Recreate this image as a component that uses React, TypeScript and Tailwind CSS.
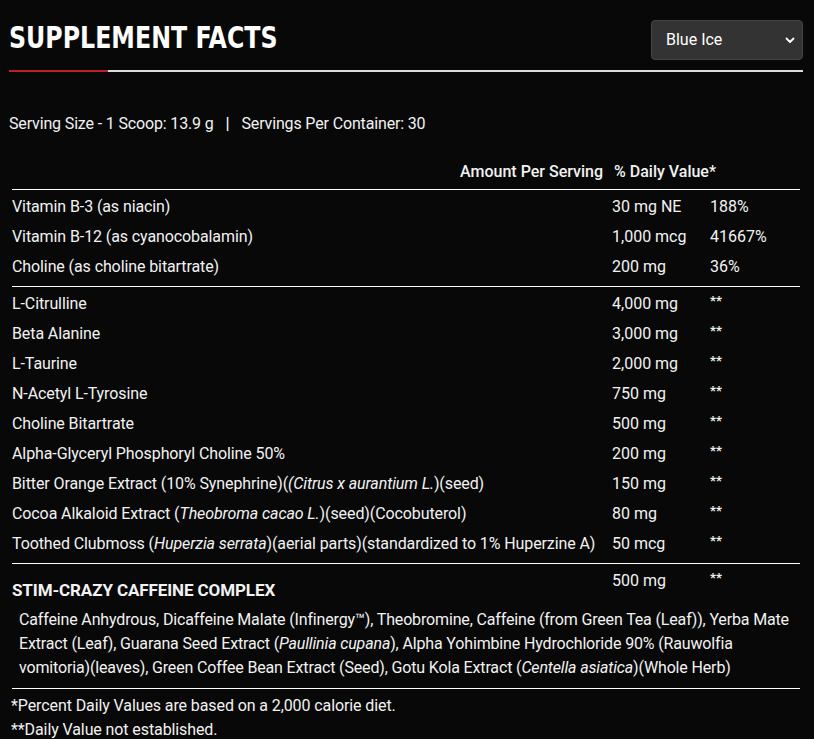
import React from "react";

type Row = { name: React.ReactNode; amt: string; dv: string };

const vit: Row[] = [
  { name: "Vitamin B-3 (as niacin)", amt: "30 mg NE", dv: "188%" },
  { name: "Vitamin B-12 (as cyanocobalamin)", amt: "1,000 mcg", dv: "41667%" },
  { name: "Choline (as choline bitartrate)", amt: "200 mg", dv: "36%" },
];

const other: Row[] = [
  { name: "L-Citrulline", amt: "4,000 mg", dv: "**" },
  { name: "Beta Alanine", amt: "3,000 mg", dv: "**" },
  { name: "L-Taurine", amt: "2,000 mg", dv: "**" },
  { name: "N-Acetyl L-Tyrosine", amt: "750 mg", dv: "**" },
  { name: "Choline Bitartrate", amt: "500 mg", dv: "**" },
  { name: "Alpha-Glyceryl Phosphoryl Choline 50%", amt: "200 mg", dv: "**" },
  {
    name: (
      <>
        Bitter Orange Extract (10% Synephrine)(<i>(Citrus x aurantium L.</i>)(seed)
      </>
    ),
    amt: "150 mg",
    dv: "**",
  },
  {
    name: (
      <>
        Cocoa Alkaloid Extract (<i>Theobroma cacao L.</i>)(seed)(Cocobuterol)
      </>
    ),
    amt: "80 mg",
    dv: "**",
  },
  {
    name: (
      <>
        Toothed Clubmoss (<i>Huperzia serrata</i>)(aerial parts)(standardized to 1% Huperzine A)
      </>
    ),
    amt: "50 mcg",
    dv: "**",
  },
];

function DataRow({ r }: { r: Row }) {
  return (
    <div className="grid h-[30px] grid-cols-[600px_98px_1fr] items-center">
      <div className="whitespace-nowrap tracking-[-0.1px]">{r.name}</div>
      <div>{r.amt}</div>
      <div className={r.dv === "**" ? "-translate-y-[3px] text-[13px] font-bold" : ""}>{r.dv}</div>
    </div>
  );
}

export default function App() {
  return (
    <div
      className="min-h-[739px] w-[814px] bg-[#080808] text-[#f2f2f2]"
      style={{ fontFamily: "Roboto, 'Liberation Sans', sans-serif" }}
    >
      <div className="px-[9px] pt-[20px]">
        <div className="flex items-start justify-between pr-[2px]">
          <h1
            className="mt-[-3px] origin-left scale-x-[0.85] whitespace-nowrap text-[31px] font-bold leading-[40px] text-white"
            style={{ fontFamily: "'DejaVu Sans Condensed', 'DejaVu Sans', sans-serif" }}
          >
            SUPPLEMENT FACTS
          </h1>
          <div className="flex h-[40px] w-[152px] items-center justify-between rounded-[4px] border border-[#444] bg-[#333333] pl-[14px] pr-[7px] text-[16px] text-white">
            <span>Blue Ice</span>
            <svg width="10" height="10" viewBox="0 0 10 10" fill="none">
              <path d="M1.5 3.5 L5 7 L8.5 3.5" stroke="white" strokeWidth="1.8" strokeLinecap="round" strokeLinejoin="round" />
            </svg>
          </div>
        </div>
        <div className="mt-[10px] flex h-[2px] w-[794px]">
          <div className="w-[99px] bg-[#b8232a]" />
          <div className="flex-1 bg-[#dcdcdc]" />
        </div>
        <div className="mt-[42px] flex items-center whitespace-nowrap text-[16px] leading-[20px] tracking-[-0.15px]">
          <span>Serving Size - 1 Scoop: 13.9 g</span>
          <span className="mx-[12px] font-bold">|</span>
          <span>Servings Per Container: 30</span>
        </div>
      </div>

      <div className="ml-[12px] w-[788px] text-[16px]">
        <div className="mt-[26px] grid h-[20px] grid-cols-[600px_98px_1fr] items-center font-medium">
          <div className="pr-[9px] text-right">Amount Per Serving</div>
          <div className="whitespace-nowrap pl-[2px]">% Daily Value*</div>
          <div />
        </div>
        <div className="mt-[9px] h-px bg-white" />
        <div className="pb-[4px] pt-[2px]">
          {vit.map((r, i) => (
            <DataRow key={i} r={r} />
          ))}
        </div>
        <div className="h-px bg-white" />
        <div className="pb-[4px] pt-[2px]">
          {other.map((r, i) => (
            <DataRow key={i} r={r} />
          ))}
        </div>
        <div className="h-px bg-white" />
        <div className="grid grid-cols-[600px_98px_1fr] pt-[7px]">
          <div className="pt-[9px] text-[17px] font-bold leading-[20px] tracking-[-0.1px]">STIM-CRAZY CAFFEINE COMPLEX</div>
          <div className="leading-[20px]">500 mg</div>
          <div className="-translate-y-[3px] text-[13px] font-bold leading-[20px]">**</div>
        </div>
        <div className="pb-[8px] pl-[7px] pr-0 pt-[8px] text-[16px] leading-[24px] tracking-[-0.15px]">
          Caffeine Anhydrous, Dicaffeine Malate (Infinergy™), Theobromine, Caffeine (from Green Tea (Leaf)), Yerba Mate
          Extract (Leaf), Guarana Seed Extract (<i>Paullinia cupana</i>), Alpha Yohimbine Hydrochloride 90% (Rauwolfia
          vomitoria)(leaves), Green Coffee Bean Extract (Seed), Gotu Kola Extract (<i>Centella asiatica</i>)(Whole Herb)
        </div>
        <div className="h-px bg-white" />
      </div>
      <div className="pl-[11px] pt-[5px] text-[16px] leading-[24px] tracking-[-0.1px]">
        <div>*Percent Daily Values are based on a 2,000 calorie diet.</div>
        <div>**Daily Value not established.</div>
      </div>
    </div>
  );
}
